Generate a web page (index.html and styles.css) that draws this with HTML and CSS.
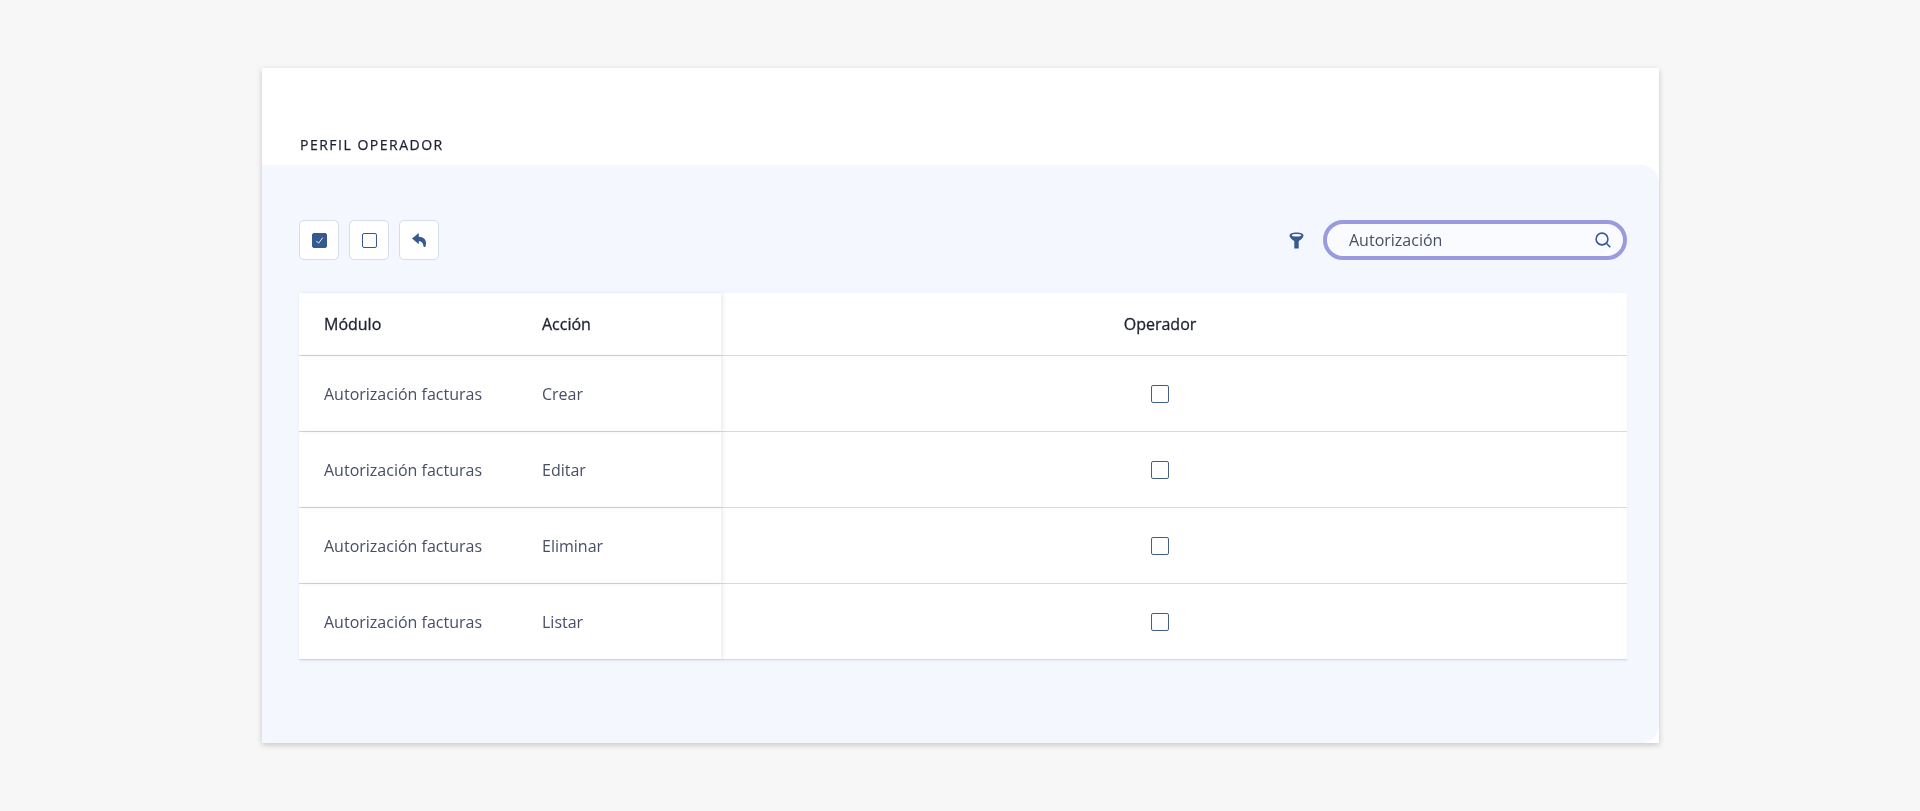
FILE: index.html
```html
<html lang="en">
<head>
  <meta charset="UTF-8">
  <meta name="viewport" content="width=device-width, initial-scale=1.0">
  <title>Perfil Operador</title>
  <link rel="stylesheet" href="styles.css">
</head>
<body>
  <div class="card">
    <h2 class="card-title">PERFIL OPERADOR</h2>
    <div class="panel">
      <div class="toolbar">
        <div class="actions">
          <button class="icon-btn"><span class="check checked">
            <svg width="9" height="9" viewBox="0 0 10 10"><path d="M1.500 5.400 4 8 8.600 1.800" fill="none" stroke="#fff" stroke-width="1"/></svg>
          </span></button>
          <button class="icon-btn"><span class="check"></span></button>
          <button class="icon-btn">
            <svg width="14" height="14" viewBox="0 0 14 14"><path d="M6.800 0 0 5.600l6.800 5.600V8.300c2.800 0 4.300 1.700 4.900 5.700h1.500c.5-1 .8-2.300.8-3.700 0-4.300-3-6.300-7.200-6.500z" fill="#36598f"/></svg>
          </button>
        </div>
        <div class="filters">
          <svg class="filter-icon" width="15" height="17" viewBox="0 0 15 17"><path fill-rule="evenodd" d="M7.500.5c4 0 7 1 7 2.900 0 2-2.500 4.200-4.800 5.700v7.400H5.300V9.100C3 7.600.5 5.400.5 3.400.5 1.500 3.500.5 7.500.5zm0 1.500C5 2 2.600 2.500 2.600 3.300s2.400 1.300 4.900 1.300 4.900-.5 4.900-1.300S10 2 7.500 2z" fill="#36598f"/></svg>
          <div class="search">
            <span class="search-text">Autorización</span>
            <svg width="16" height="16" viewBox="0 0 16 16"><circle cx="7" cy="7" r="5.900" fill="none" stroke="#36598f" stroke-width="1.600"/><path d="M11.300 11.300 15.300 15.300" stroke="#36598f" stroke-width="1.600"/></svg>
          </div>
        </div>
      </div>

      <div class="table">
        <div class="row head">
          <div class="fixed">
            <div class="col-mod">Módulo</div>
            <div class="col-act">Acción</div>
          </div>
          <div class="col-op">Operador</div>
        </div>
        <div class="row">
          <div class="fixed">
            <div class="col-mod">Autorización facturas</div>
            <div class="col-act">Crear</div>
          </div>
          <div class="col-op"><span class="check large"></span></div>
        </div>
        <div class="row">
          <div class="fixed">
            <div class="col-mod">Autorización facturas</div>
            <div class="col-act">Editar</div>
          </div>
          <div class="col-op"><span class="check large"></span></div>
        </div>
        <div class="row">
          <div class="fixed">
            <div class="col-mod">Autorización facturas</div>
            <div class="col-act">Eliminar</div>
          </div>
          <div class="col-op"><span class="check large"></span></div>
        </div>
        <div class="row">
          <div class="fixed">
            <div class="col-mod">Autorización facturas</div>
            <div class="col-act">Listar</div>
          </div>
          <div class="col-op"><span class="check large"></span></div>
        </div>
      </div>
    </div>
  </div>
</body>
</html>
```

FILE: styles.css
```css
body {
  margin: 0;
  height: 811px;
  background: #f7f7f7;
  font-family: "Open Sans", sans-serif;
  color: #474f64;
  overflow: hidden;
}

.card {
  width: 1397px;
  margin: 68px 0 0 262px;
  background: #fff;
  box-shadow: 0 2px 6px rgba(0, 0, 0, 0.2);
  will-change: transform;
}

.card-title {
  margin: 0;
  height: 97px;
  box-sizing: border-box;
  padding: 67px 0 0 38px;
  font-size: 14px;
  line-height: 19px;
  font-weight: 400;
  letter-spacing: 1.5px;
  color: #1c2233;
  -webkit-text-stroke: 0.25px #1c2233;
}

.panel {
  height: 578px;
  box-sizing: border-box;
  padding: 55px 32px 0 37px;
  background: #f4f7fe;
  border-radius: 0 18px 18px 0;
}

.toolbar {
  display: flex;
  justify-content: space-between;
  align-items: center;
  margin-bottom: 33px;
}

.actions {
  display: flex;
  gap: 10px;
}

.icon-btn {
  display: flex;
  align-items: center;
  justify-content: center;
  width: 40px;
  height: 40px;
  padding: 0;
  background: #fff;
  border: 1px solid #d5dcea;
  border-radius: 5px;
}

.check {
  display: inline-block;
  box-sizing: border-box;
  width: 15px;
  height: 15px;
  border: 1px solid #36598f;
  border-radius: 2px;
  background: #fff;
}

.check.checked {
  display: flex;
  align-items: center;
  justify-content: center;
  background: #36598f;
}

.check.large {
  width: 18px;
  height: 18px;
  border-color: #42608a;
}

.filters {
  display: flex;
  align-items: center;
  gap: 19px;
}

.filter-icon {
  display: block;
}

.search {
  display: flex;
  align-items: center;
  justify-content: space-between;
  box-sizing: border-box;
  width: 304px;
  height: 40px;
  padding: 0 12px 0 22px;
  background: #fafbff;
  border: 4px solid #9a9ae0;
  border-radius: 20px;
  font-size: 16px;
}

.table {
  background: #fff;
  font-size: 16px;
  box-shadow: 0 1px 2px rgba(0, 0, 0, 0.06);
}

.row {
  display: flex;
  height: 76px;
  box-sizing: border-box;
  border-bottom: 1px solid #d3dbe6;
  align-items: stretch;
}

.row.head {
  height: 63px;
  color: #1c2233;
  -webkit-text-stroke: 0.3px #1c2233;
}

.fixed {
  display: flex;
  align-items: center;
  width: 422px;
  box-shadow: 2px 0 4px rgba(0, 0, 0, 0.08);
  flex: none;
}

.col-mod {
  width: 243px;
  padding-left: 25px;
  box-sizing: border-box;
}

.col-op {
  flex: 1;
  display: flex;
  align-items: center;
  justify-content: center;
  padding-right: 28px;
}
```
